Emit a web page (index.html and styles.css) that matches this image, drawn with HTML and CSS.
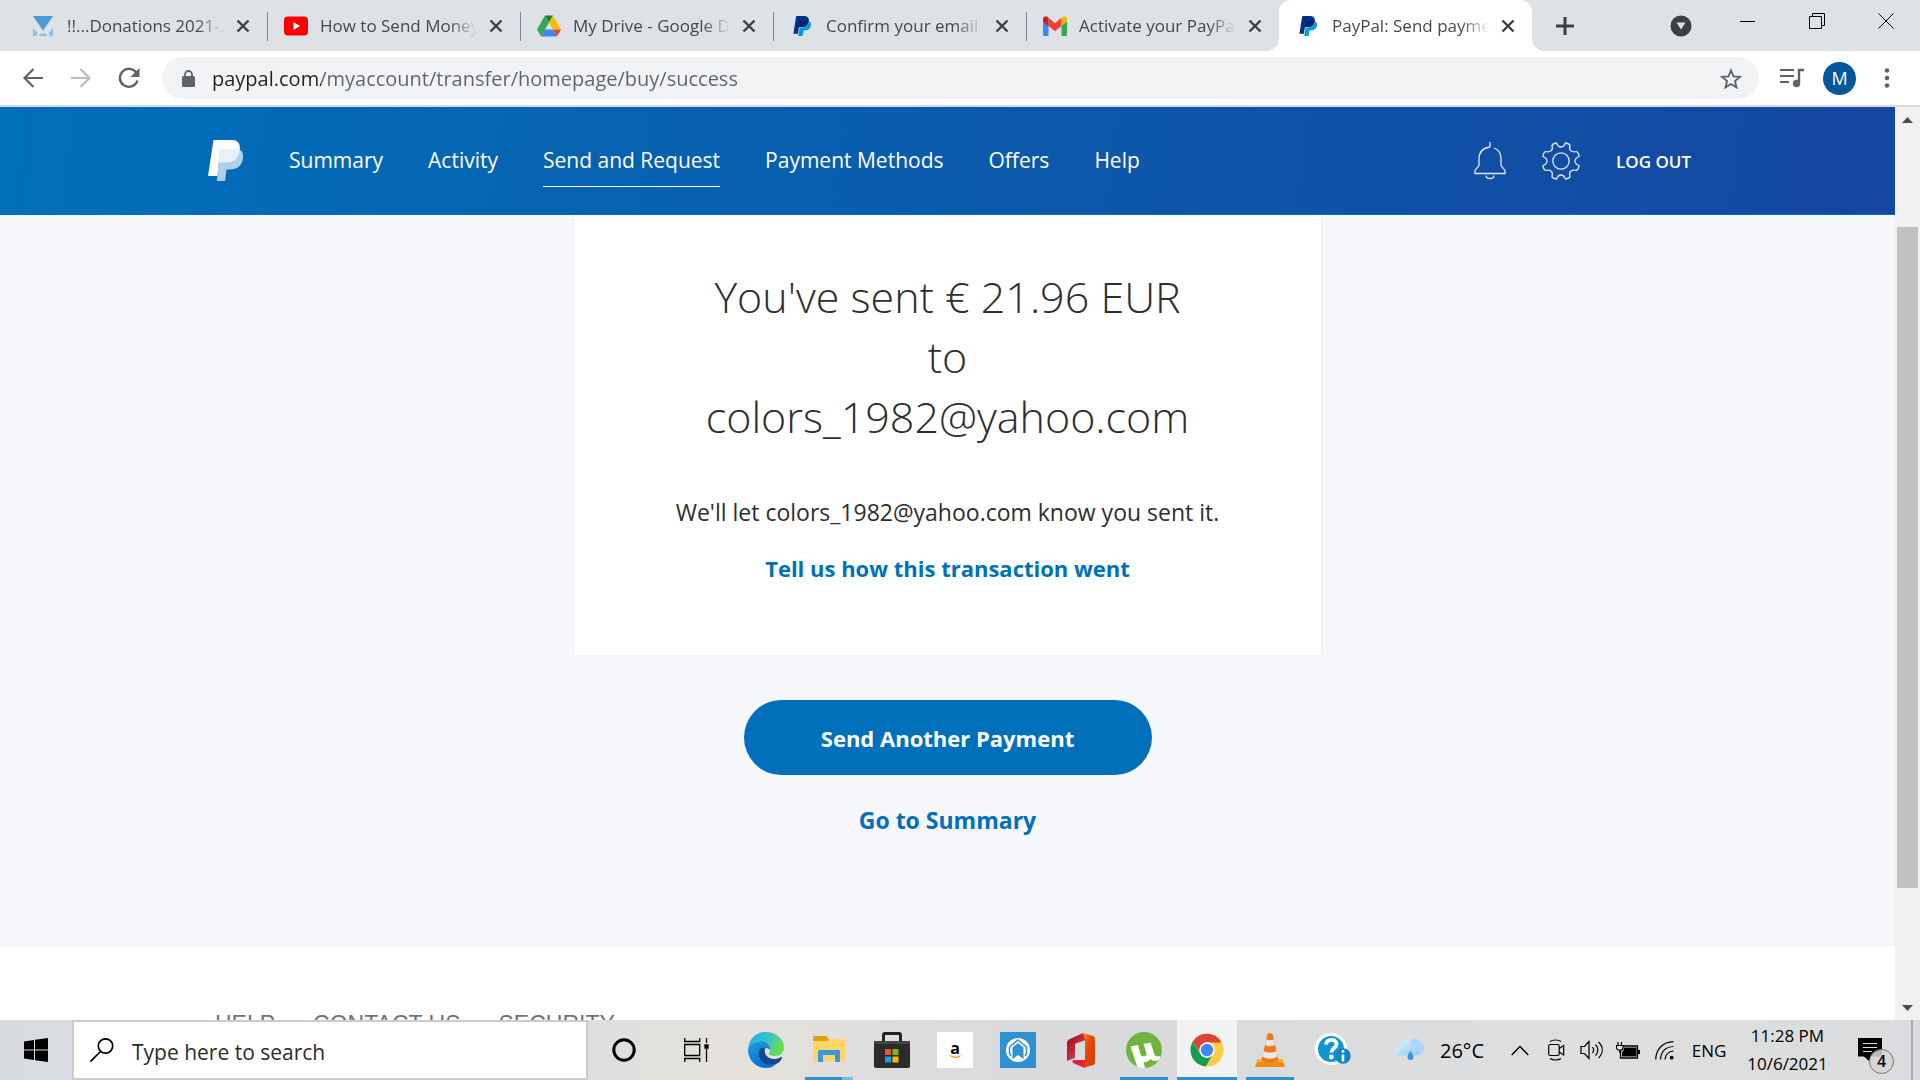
FILE: index.html
```html
<!DOCTYPE html>
<html lang="en">
<head>
<meta charset="utf-8">
<meta name="viewport" content="width=device-width, initial-scale=1">
<title>PayPal: Send payment</title>
<link rel="stylesheet" href="styles.css">
</head>
<body>
<svg class="defs" aria-hidden="true">
  <defs>
    <symbol id="x" viewBox="0 0 14 16"><path d="M1.500 2.500l11 11M12.500 2.500l-11 11" stroke="#3c4043" stroke-width="2.400" fill="none"/></symbol>
    <symbol id="pp" viewBox="0 0 24 24"><path fill="#009cde" d="M21.200 6.900c-.2-.2-.4-.4-.6-.5-.9 5-4.100 7.400-9.200 7.400H9.200l-1.700 9.500c0 .4.200.7.600.7H12c.5 0 .9-.3.900-.8l.8-5.100c.1-.5.500-.8 1-.8h.5c3.800 0 6.700-1.500 7.600-5.900.3-1.900.1-3.400-1.600-4.500z"/><path fill="#003087" d="M7.100 21.300H2.500a.6.600 0 0 1-.7-.7L4.900.9c.1-.5.600-.9 1.100-.9h7.500c2.500 0 4.500.5 5.600 1.800 1 1.200 1.300 2.400 1.100 4.300-1 5.500-4.400 7.200-8.700 7.200H9.300c-.5 0-1 .4-1.100.9z"/><path fill="#012169" d="M9.500 6h9c.9 0 1.300.3 1.600.6-1.200 5.400-4.500 6.700-8.600 6.700H9.300c-.5 0-.9.3-1 .7z"/></symbol>
  </defs>
</svg>

<header class="tabstrip">
  <div class="tabs" role="tablist">
    <div class="tab" role="tab">
      <svg class="fav" viewBox="0 0 18 18"><path fill="#4a9bd4" d="M0 0h18L9 13z"/><path fill="#8cc0e4" d="M0 18v-7l4 4-1 3zM18 18v-7l-4 4 1 3zM6 16h6v2H6z"/></svg>
      <span class="tab-title">!!...Donations 2021-2022</span><button class="tab-x" aria-label="Close tab"><svg><use href="#x"/></svg></button>
    </div>
    <div class="tab" role="tab">
      <svg class="fav wide" viewBox="0 0 24 19"><rect width="24" height="19" rx="4" fill="#f00"/><path fill="#fff" d="M9.500 5.500v8l6.500-4z"/></svg>
      <span class="tab-title">How to Send Money on PayPal</span><button class="tab-x" aria-label="Close tab"><svg><use href="#x"/></svg></button>
    </div>
    <div class="tab" role="tab">
      <svg class="fav wide" viewBox="0 0 24 21"><path fill="#34a853" d="M8 0L0 14l4 7 8-14z"/><path fill="#188038" d="M8 0h8l-4 7z"/><path fill="#fbbc04" d="M16 0l8 14h-8L12 7z"/><path fill="#4285f4" d="M4 21l4-7h8l4 7z"/><path fill="#ea4335" d="M16 14h8l-4 7z"/></svg>
      <span class="tab-title">My Drive - Google Drive</span><button class="tab-x" aria-label="Close tab"><svg><use href="#x"/></svg></button>
    </div>
    <div class="tab" role="tab">
      <svg class="fav"><use href="#pp"/></svg>
      <span class="tab-title">Confirm your email</span><button class="tab-x" aria-label="Close tab"><svg><use href="#x"/></svg></button>
    </div>
    <div class="tab last" role="tab">
      <svg class="fav wide" viewBox="0 0 24 20"><path fill="#4285f4" d="M0 4v14.500c0 .9.700 1.500 1.600 1.500H5.500V9z"/><path fill="#34a853" d="M24 4v14.500c0 .9-.7 1.500-1.600 1.500h-3.900V9z"/><path fill="#ea4335" d="M5.500 1.800L12 7.200l6.500-5.400V10L12 15.300 5.500 10z"/><path fill="#c5221f" d="M0 3.300C0 .6 2.700-.7 4.500.8l1 1V10L0 5.500z"/><path fill="#fbbc04" d="M24 3.300c0-2.700-2.700-4-4.500-2.500l-1 1V10L24 5.500z"/></svg>
      <span class="tab-title">Activate your PayPal account</span><button class="tab-x" aria-label="Close tab"><svg><use href="#x"/></svg></button>
    </div>
    <div class="tab active" role="tab" aria-selected="true">
      <svg class="fav"><use href="#pp"/></svg>
      <span class="tab-title">PayPal: Send payment</span><button class="tab-x" aria-label="Close tab"><svg><use href="#x"/></svg></button>
    </div>
  </div>
  <button class="newtab" aria-label="New tab"><svg width="18" height="18" viewBox="0 0 18 18"><path d="M9 0v18M0 9h18" stroke="#3c4043" stroke-width="3"/></svg></button>
  <div class="window-controls">
    <button class="tabsearch" aria-label="Search tabs"><svg width="22" height="22" viewBox="0 0 22 22"><circle cx="11" cy="11" r="10.500" fill="#3c4043"/><path d="M6.500 7.500h9L11 14.500z" fill="#dee1e6"/></svg></button>
    <button aria-label="Minimize"><svg width="15" height="15" viewBox="0 0 15 15"><path d="M0 7.500h15" stroke="#000"/></svg></button>
    <button aria-label="Restore"><svg width="16" height="16" viewBox="0 0 16 16" fill="none" stroke="#000"><path d="M.5 3.500h12v12H.5zM3.500 3V.5h12v12H13"/></svg></button>
    <button aria-label="Close"><svg width="16" height="16" viewBox="0 0 16 16"><path d="M.5.5l15 15M15.500.5l-15 15" stroke="#000"/></svg></button>
  </div>
</header>

<div class="toolbar">
  <button aria-label="Back"><svg width="20" height="20" viewBox="0 0 20 20" fill="none" stroke="#5f6368" stroke-width="2.200"><path d="M20 10H2M10.500 1L1.500 10l9 9"/></svg></button>
  <button aria-label="Forward"><svg width="20" height="20" viewBox="0 0 20 20" fill="none" stroke="#babcbe" stroke-width="2.200"><path d="M0 10h18M9.500 1l9 9-9 9"/></svg></button>
  <button aria-label="Reload"><svg width="22" height="22" viewBox="0 0 22 22"><path d="M18.500 6A9 9 0 1 0 19.500 13.500" fill="none" stroke="#5f6368" stroke-width="2.400"/><path d="M21.500 1v9h-9z" fill="#5f6368"/></svg></button>
  <div class="omnibox">
    <svg width="13" height="17" viewBox="0 0 13 17"><rect y="6" width="13" height="11" rx="1.500" fill="#5f6368"/><path d="M3 7V4.500a3.500 3.500 0 0 1 7 0V7" fill="none" stroke="#5f6368" stroke-width="1.800"/></svg>
    <input class="url" type="text" aria-label="Address" value="paypal.com/myaccount/transfer/homepage/buy/success">
    <button class="star" aria-label="Bookmark"><svg width="22" height="21" viewBox="0 0 22 21"><path d="M11 2.500l2.500 5.900 6.400.5-4.900 4.200 1.500 6.300L11 16l-5.500 3.400L7 13.100 2.100 8.900l6.400-.5z" fill="none" stroke="#5f6368" stroke-width="1.900"/></svg></button>
  </div>
  <button class="media" aria-label="Media"><svg width="24" height="20" viewBox="0 0 24 20"><path d="M0 2h14M0 8h14M0 14h9" stroke="#5f6368" stroke-width="2.200"/><path d="M19 15V2h5" fill="none" stroke="#5f6368" stroke-width="2.400"/><circle cx="16.500" cy="15.500" r="3.700" fill="#5f6368"/></svg></button>
  <button class="avatar" aria-label="Profile">M</button>
  <button aria-label="Menu"><svg width="6" height="20" viewBox="0 0 6 20" fill="#5f6368"><circle cx="3" cy="2.500" r="2.300"/><circle cx="3" cy="10" r="2.300"/><circle cx="3" cy="17.500" r="2.300"/></svg></button>
</div>

<div class="viewport">
  <div class="page">
    <div class="pp-header">
      <div class="pp-inner">
        <a href="#" class="pp-logo" aria-label="PayPal"><svg width="36" height="42" viewBox="0 0 36 42"><defs><clipPath id="bowl"><path d="M5.500 0H24c6 0 8.500 4 7.800 9.500C31 18 26 22.500 19 22.500H0z"/></clipPath></defs><path fill="#fff" d="M5.500 0H24c6 0 8.500 4 7.800 9.500C31 18 26 22.500 19 22.500h-8L9.500 36H0z"/><path fill="#b0cfe8" d="M14.500 9H30c4 1 5.500 4 5 9-1 8-6 11.500-13 11.500h-3.500L17.300 40c-.1.600-.5 1-1 1H8.800l3-30c.1-1.200 1.200-2 2.700-2z"/><path clip-path="url(#bowl)" fill="#e6f1f8" d="M14.500 9H30c4 1 5.500 4 5 9-1 8-6 11.500-13 11.500h-3.500L17.300 40c-.1.600-.5 1-1 1H8.800l3-30c.1-1.200 1.200-2 2.700-2z"/></svg></a>
        <nav class="pp-nav">
          <a href="#">Summary</a><a href="#">Activity</a><a href="#" class="current">Send and Request</a><a href="#">Payment Methods</a><a href="#">Offers</a><a href="#">Help</a>
        </nav>
        <div class="pp-tools">
          <a href="#" aria-label="Notifications"><svg width="32" height="38" viewBox="0 0 32 38" fill="none" stroke="#dfe8f5" stroke-width="1.300"><path d="M16 0v5M16 5C8.500 6 5 11 5 17v6c0 2-4 4-4 6v2.500h30V29c0-2-4-4-4-6v-6c0-5-2.500-9.500-7-11M12 33.500c0 4 8 4 8 0"/></svg></a>
          <a href="#" aria-label="Settings"><svg width="38" height="38" viewBox="-19 -19 38 38" fill="none" stroke="#dfe8f5" stroke-width="1.300"><circle r="8.200"/><path d="M-4.500-18 Q-8.500-17.500-9-15.500 Q-8-12-9.500-10.500 Q-12-8.500-15.500-9.500 Q-18-8-18-4.500 Q-14-3-14 0 Q-14 3-18 4.500 Q-18 8-15.500 9.500 Q-12 8.500-9.500 10.500 Q-8 12-9 15.500 Q-8.500 17.500-4.500 18 Q-3 14 0 14 Q3 14 4.500 18 Q8.500 17.500 9 15.500 Q8 12 9.500 10.500 Q12 8.500 15.500 9.500 Q18 8 18 4.500 Q14 3 14 0 Q14-3 18-4.500 Q18-8 15.500-9.500 Q12-8.500 9.500-10.500 Q8-12 9-15.500 Q8.500-17.500 4.500-18 Q3-14 0-14 Q-3-14-4.500-18z"/></svg></a>
          <a href="#" class="logout">LOG OUT</a>
        </div>
      </div>
    </div>
    <main>
      <section class="card">
        <h1>You've sent € 21.96 EUR<br>to<br>colors_1982@yahoo.com</h1>
        <p>We'll let colors_1982@yahoo.com know you sent it.</p>
        <a href="#">Tell us how this transaction went</a>
      </section>
      <button class="primary">Send Another Payment</button>
      <a href="#" class="summary-link">Go to Summary</a>
    </main>
    <footer><a href="#">HELP</a><a href="#">CONTACT US</a><a href="#">SECURITY</a></footer>
  </div>
  <div class="scrollbar" aria-hidden="true">
    <svg width="11" height="6" viewBox="0 0 11 6"><path d="M5.500 0L11 6H0z" fill="#505050"/></svg>
    <div class="track"><div class="thumb"></div></div>
    <svg width="11" height="6" viewBox="0 0 11 6"><path d="M5.500 6L11 0H0z" fill="#505050"/></svg>
  </div>
</div>

<div class="taskbar">
  <button class="start" aria-label="Start"><svg width="24" height="24" viewBox="0 0 24 24"><path d="M0 3.500L10 2v9.500H0zM11 1.800L24 0v11.500H11zM0 12.500h10V22L0 20.500zM11 12.500h13V24l-13-1.800z"/></svg></button>
  <label class="search"><svg width="24" height="24" viewBox="0 0 24 24" fill="none" stroke="#000" stroke-width="1.700"><circle cx="15.500" cy="8" r="7.200"/><path d="M10.500 13.500L.5 23.500"/></svg><input type="text" placeholder="Type here to search" aria-label="Type here to search"></label>
  <button class="sys" aria-label="Cortana"><svg width="24" height="24" viewBox="0 0 24 24"><circle cx="12" cy="12" r="10.200" fill="none" stroke="#000" stroke-width="3"/></svg></button>
  <button class="sys" aria-label="Task View"><svg width="25" height="24" viewBox="0 0 25 24" fill="none" stroke="#000" stroke-width="1.300"><path d="M.7 0v3.500h15V0M.7 6.500h15v11H.7zM.7 24v-3.500h15V24M22.500 0v5M22.500 11v13"/><path d="M21 7h3v3h-3z" fill="#000"/></svg></button>
  <div class="apps">
    <button aria-label="Edge"><svg width="36" height="36" viewBox="0 0 36 36"><defs><linearGradient id="e1" x2="1" y2=".4"><stop stop-color="#1fa8e8"/><stop offset=".5" stop-color="#35c1d0"/><stop offset="1" stop-color="#66dd55"/></linearGradient><linearGradient id="e2" y2="1" x2=".5"><stop stop-color="#1b9de2"/><stop offset="1" stop-color="#0b6fd0"/></linearGradient></defs><path fill="url(#e2)" d="M0 18C1 12 7 9 13 9c6 0 10 4 9 9-3-4-9-1-9 5 0 6 7 11 15 9-3 3-6 4-10 4C8 36 0 28 0 18z"/><path fill="#114a8b" d="M12 17c-4 8 3 19 16 15 3-1 5-4 6-6 0-1 0-1-1-1-8 5-18 0-16-8-3-3-4-1-5 0z"/><path fill="url(#e1)" d="M0 17C1 7 8 0 18 0c10 0 18 7 18 15 0 6-4 9-9 9-4 0-7-1-6-3 3-4 0-12-9-12C6 9 2 12 0 17z"/></svg></button>
    <button class="stacked" aria-label="File Explorer"><svg width="32" height="28" viewBox="0 0 32 28"><path fill="#dfa00f" d="M0 1.500C0 .6.600 0 1.500 0h12L16 3v4H0z"/><path fill="#ffd666" d="M0 5h14l2-2h14.500c.9 0 1.500.6 1.500 1.500v19c0 .9-.6 1.500-1.500 1.500h-29C.6 25 0 24.400 0 23.500z"/><path fill="#3a96dd" d="M5 15.500c0-1 .6-1.500 1.500-1.500h19c.9 0 1.500.5 1.500 1.500V26h-5v-7H10v7H5z"/></svg></button>
    <button aria-label="Microsoft Store"><svg width="36" height="36" viewBox="0 0 36 36"><path d="M9.500 10V3c0-1 .5-1.500 1.500-1.500h14c1 0 1.500.5 1.500 1.500v7" fill="none" stroke="#222" stroke-width="3"/><path d="M0 9h36v25c0 1-1 2-2 2H2c-1 0-2-1-2-2z" fill="#2b2b2b"/><path fill="#444" d="M0 9h36v3H0z"/><path fill="#f25022" d="M11 17h6v6h-6z"/><path fill="#7fba00" d="M18.500 17h6v6h-6z"/><path fill="#00a4ef" d="M11 24.500h6v6h-6z"/><path fill="#ffb900" d="M18.500 24.500h6v6h-6z"/></svg></button>
    <button aria-label="Amazon"><span class="amazon"><span>a</span><svg width="11" height="4" viewBox="0 0 11 4"><path d="M.5.500C3 3 8 3 10.500.500" fill="none" stroke="#f90" stroke-width="1.300"/></svg></span></button>
    <button aria-label="Home app"><svg width="36" height="36" viewBox="0 0 36 36"><path fill="#2d92cf" d="M0 0h36v36H0z"/><circle cx="18" cy="18" r="12" fill="#fff"/><path fill="none" stroke="#2d92cf" stroke-width="1.500" d="M11 24l-1.500-2.500V15L18 8l8.500 7v6.500L25 24"/><path fill="#2d92cf" d="M12.500 15.500L18 11l5.500 4.500V27L18 23l-5.500 4z"/></svg></button>
    <button aria-label="Office"><svg width="28" height="35" viewBox="0 0 28 35"><defs><linearGradient id="o1" y2="1"><stop stop-color="#8c0d12"/><stop offset=".5" stop-color="#c9293c"/><stop offset="1" stop-color="#b869c4"/></linearGradient><linearGradient id="o2" y2="1"><stop stop-color="#ff9416"/><stop offset=".4" stop-color="#e34a08"/><stop offset="1" stop-color="#d83b01"/></linearGradient></defs><path fill="url(#o1)" d="M0 10c0-2 1-3 3-4L16 0l3 7-9 3c-1 .4-2 1-2 2v13l-8 3z"/><path fill="#e01f3d" d="M7 27h11v8L6 30c-1-1-1-3 1-3z"/><path fill="url(#o2)" d="M16 0l10 3c1 .3 2 1 2 3v23c0 2-1 3-2 3l-10 3 2-6V6z"/></svg></button>
    <button class="running" aria-label="uTorrent"><svg width="36" height="36" viewBox="0 0 36 36"><defs><clipPath id="disc"><circle cx="18" cy="18" r="18"/></clipPath></defs><circle cx="18" cy="18" r="18" fill="#6fb43f"/><path clip-path="url(#disc)" fill="#fff" d="M4.500 14.500L12 13l2.500 9c1 3.500 6.500 3 6-.5L17.500 12l7-1.500 4 12c.8 2 3.500 2.300 5.500 1.500l1 3c-4 2.500-8.500 2.500-10.500 0-1.500 2.500-4.500 3.500-7 3l1.500 6-7 1z"/></svg></button>
    <button class="focused" aria-label="Chrome"><svg width="34" height="34" viewBox="0 0 34 34"><circle cx="17" cy="17" r="16.500" fill="#ffcd42"/><path fill="#db4437" d="M2.700 8.700a16.500 16.500 0 0 1 28.800.8H17a7.500 7.500 0 0 0-7 10z"/><path fill="#0f9d58" d="M2.700 8.700a16.500 16.500 0 0 0 13 24.700l7.500-12.600a7.500 7.500 0 0 1-13 0z"/><circle cx="17" cy="17" r="7.700" fill="#fff"/><circle cx="17" cy="17" r="6.200" fill="#4285f4"/></svg></button>
    <button class="running" aria-label="VLC"><svg width="30" height="34" viewBox="0 0 30 34"><path fill="#f08a12" d="M3 26h24l3 8H0z"/><path fill="#ffad33" d="M3 26h24l1 3H2z"/><path fill="#ee7a1b" d="M12.500 1c1-1 4-1 5 0l6 26c-1 3-16 3-17 0z"/><path fill="#e8e8e8" d="M11.300 6.500c2 1 5.500 1 7.500 0l1.300 5.500c-3 1.500-7 1.500-10 0zM8.500 18c4 2 9 2 13 0l1.300 5.500c-5 3-10.500 3-15.500 0z"/></svg></button>
    <button aria-label="Help"><svg width="36" height="34" viewBox="0 0 36 34"><circle cx="16" cy="16" r="16" fill="#fff"/><circle cx="16" cy="16" r="13" fill="#0e95d2"/><path d="M11 11.500c1-6 10.500-6 10.500-.5 0 4-5 4-5 8.500" fill="none" stroke="#fff" stroke-width="3.800"/><circle cx="16.300" cy="24" r="2.400" fill="#fff"/><circle cx="28" cy="23" r="7.700" fill="#0e86c4"/><path d="M28 21.500v7M28 17v2.800" stroke="#fff" stroke-width="2.600"/></svg></button>
  </div>
  <div class="tray">
    <button class="weather"><svg width="30" height="24" viewBox="0 0 30 24"><defs><linearGradient id="w" x2="1" y2="1"><stop stop-color="#e2f4fe"/><stop offset="1" stop-color="#8fc8f2"/></linearGradient></defs><path fill="#a9d8f8" d="M14 5c2-7 11-5 11 0 6 1 6 11-1 12h-8z"/><path fill="url(#w)" d="M5 17.500C-1.500 17.500-1 9 4.500 9 5 1 16-1 18.500 7c5-1 6 3 5.500 6-1 4-3 4.500-5 4.500z"/><path fill="#3f8fe0" d="M15.500 13c4 5 4 8.500 0 9-4-.5-4-4 0-9z"/></svg><span>26°C</span></button>
    <button class="cell" aria-label="Show hidden icons"><svg width="18" height="11" viewBox="0 0 18 11"><path d="M.7 10L9 1.500l8.300 8.500" fill="none" stroke="#000" stroke-width="1.400"/></svg></button>
    <button class="cell" aria-label="Meet Now"><svg width="17" height="22" viewBox="0 0 17 22" fill="none" stroke="#000" stroke-width="1.200"><rect x=".7" y="5.500" width="10.500" height="11" rx="1.500"/><path d="M11.200 9.500l4.500-3v9.500l-4.500-3M2 2.500c3-2 8-2 11 0M2 19.500c3 2 8 2 11 0"/></svg></button>
    <button class="cell" aria-label="Volume"><svg width="24" height="20" viewBox="0 0 24 20" fill="none" stroke="#000" stroke-width="1.200"><path d="M1 6.500h3.500L9 1.500v17l-4.500-5H1zM12.500 7c1.500 2 1.500 4 0 6M15.500 4.500c3 3.500 3 7.500 0 11M18.500 2c5 5 5 11 0 16"/></svg></button>
    <button class="cell" aria-label="Battery"><svg width="24" height="17" viewBox="0 0 24 17"><path d="M4.500 8v8h17V4H7" fill="none" stroke="#000" stroke-width="1.300"/><path d="M8 5.500h12.500v9H6V10c1.500-1 2-2 2-4.500zM22 8h2v4h-2z"/><path d="M2 0v3.500M5.500 0v3.500M.5 3.500h6.500V6c0 3-6.500 3-6.500 0zM3.800 8v3" fill="none" stroke="#000" stroke-width="1.200"/></svg></button>
    <button class="cell" aria-label="Wi-Fi"><svg width="19" height="19" viewBox="0 0 19 19" fill="none" stroke="#000" stroke-width="1.200"><path d="M.7 18.500C1 8 8 1 18.500.7M5.500 18.500C6 10.500 10.500 6 18.500 5.500M10 18.500c.5-5 3.500-8 8.500-8.500"/><circle cx="16.700" cy="16.700" r="1.300" fill="#000"/></svg></button>
    <button class="lang">ENG</button>
    <button class="clock"><time>11:28 PM</time><time>10/6/2021</time></button>
    <button class="action" aria-label="Notifications"><svg width="24" height="24" viewBox="0 0 24 24"><path d="M0 0h24v18.500H12V24l-6-5.500H0z"/><path d="M5 5.500h14M5 9.500h14M5 13.500h9" stroke="#ddd" stroke-width="1.200"/></svg><span class="badge">4</span></button>
    <span class="desk"></span>
  </div>
</div>
</body>
</html>
```
FILE: styles.css
```css
* { box-sizing: border-box; }
body {
  margin: 0;
  height: 100vh;
  display: flex;
  flex-direction: column;
  overflow: hidden;
  font-family: "Open Sans", "Noto Sans", sans-serif;
  background: #fff;
}
.defs { position: absolute; width: 0; height: 0; }
button {
  border: 0;
  padding: 0;
  background: none;
  font: inherit;
  color: inherit;
  display: flex;
  align-items: center;
  justify-content: center;
  flex: none;
}
a { text-decoration: none; color: inherit; }
svg { display: block; flex: none; }

/* Tab strip */
.tabstrip { flex: none; height: 51px; display: flex; background: #dee1e6; padding-left: 14px; }
.tabs { display: flex; min-width: 0; }
.tab {
  position: relative;
  width: 253px;
  min-width: 0;
  display: flex;
  align-items: center;
  padding: 0 17px;
  color: #45494d;
  font-size: 17px;
}
.tab::after { content: ""; position: absolute; right: -1px; top: 12px; width: 1px; height: 29px; background: #80868b; }
.tab.last::after, .tab.active::after { display: none; }
.tab.active { background: #fff; border-radius: 12px 12px 0 0; }
.tab.active::before {
  content: "";
  position: absolute;
  left: -12px;
  right: -12px;
  bottom: 0;
  height: 12px;
  background:
    radial-gradient(circle at 0 0, transparent 12px, #fff 12px) left / 12px 12px no-repeat,
    radial-gradient(circle at 100% 0, transparent 12px, #fff 12px) right / 12px 12px no-repeat;
}
.fav { width: 24px; height: 22px; padding: 0 2px; margin-right: 12px; }
.fav.wide { padding: 0; }
.tab-title {
  flex: 1;
  overflow: hidden;
  white-space: nowrap;
  line-height: 24px;
  -webkit-mask-image: linear-gradient(90deg, #000 calc(100% - 28px), transparent);
  mask-image: linear-gradient(90deg, #000 calc(100% - 28px), transparent);
}
.tab-x { width: 14px; height: 16px; margin-left: 12px; }
.tab-x svg { width: 14px; height: 16px; }
.newtab { width: 66px; }
.window-controls { margin-left: auto; display: flex; height: 42px; }
.window-controls button { width: 69px; }
.window-controls .tabsearch { height: 51px; width: 64px; }

/* Toolbar */
.toolbar {
  flex: none;
  height: 56px;
  display: flex;
  align-items: center;
  padding: 0 9px;
  border-bottom: 2px solid #dadada;
}
.toolbar > button { width: 48px; height: 48px; }
.omnibox {
  flex: 1;
  height: 42px;
  margin: 0 9px;
  padding: 0 17px 0 20px;
  border-radius: 21px;
  background: #f1f3f4;
  display: flex;
  align-items: center;
  gap: 17px;
}
.url {
  flex: 1;
  min-width: 0;
  border: 0;
  padding: 2px 0 0;
  font: 20px/30px "Open Sans", sans-serif;
  color: #5f6368;
  background: linear-gradient(90deg, #202124 109px, #5f6368 109px);
  -webkit-background-clip: text;
  background-clip: text;
  -webkit-text-fill-color: transparent;
}
.toolbar > .avatar { width: 33px; height: 33px; margin: 0 7px; border-radius: 50%; background: #01579b; color: #fff; font-size: 18px; }

/* Page area */
.viewport { flex: 1; min-height: 0; display: flex; overflow: hidden; }
.page { flex: 1; min-width: 0; overflow: hidden; }
.pp-header {
  height: 108px;
  padding: 0 204px 0 208px;
  background: linear-gradient(97deg, #0070ba, #1546a0);
  border-bottom: 1px solid #0070ba;
  color: #fff;
  font-weight: 500;
}
.pp-inner { height: 100%; max-width: 1484px; margin: 0 auto; display: flex; align-items: center; }
.pp-nav { display: flex; gap: 45px; margin-left: 45px; font-size: 21px; line-height: 28px; }
.pp-nav a { padding: 12px 0; border-bottom: 1px solid transparent; }
.pp-nav .current { border-color: #fff; }
.pp-tools { margin-left: auto; display: flex; align-items: center; gap: 36px; }
.logout { padding-top: 2px; font-size: 17px; line-height: 24px; font-weight: 600; }
main {
  display: flex;
  flex-direction: column;
  align-items: center;
  padding-bottom: 112px;
  background: #f5f7fb;
  color: #2c2e2f;
}
.card {
  width: 100%;
  max-width: 749px;
  padding: 52px 24px 72px;
  border: 1px solid #eff0f2;
  border-top: 0;
  background: #fff;
  text-align: center;
  font-size: 22px;
  line-height: 30px;
}
h1 { margin: 0 0 50px; font-size: 43px; line-height: 60px; font-weight: 300; }
.card p { margin: 0 0 26px; font-size: 23px; }
.card a, .summary-link { color: #0070ba; font-weight: 700; }
.primary {
  width: 408px;
  height: 75px;
  margin: 44px 0 30px;
  border-radius: 38px;
  background: #0070ba;
  color: #fff;
  font-size: 22px;
  font-weight: 700;
}
.summary-link { font-size: 23px; line-height: 30px; }
footer {
  display: flex;
  gap: 38px;
  padding: 62px 215px;
  font: 23px/30px "Liberation Sans", Arial, sans-serif;
  color: #6c7378;
}
.scrollbar {
  flex: none;
  width: 25px;
  background: #f1f1f1;
  display: flex;
  flex-direction: column;
  align-items: center;
  padding: 10px 0 9px;
}
.track { flex: 1; width: 21px; padding: 104px 0 117px; display: flex; }
.thumb { flex: 1; background: #c1c1c1; }

/* Taskbar */
.taskbar {
  flex: none;
  height: 60px;
  display: flex;
  background: linear-gradient(90deg, #d8dbe0, #dcddde 28%, #e5e2dd 38%, #dcdcdc 48%, #d8dadc 56%, #dcddde 75%, #dedfdd 88%, #d9dbde);
  color: #000;
}
.start { width: 72px; }
.search {
  flex: 0 1 516px;
  display: flex;
  align-items: center;
  gap: 18px;
  padding: 0 16px;
  border: 2px solid #ccc;
  background: #fff;
}
.search input { flex: 1; min-width: 0; border: 0; padding: 4px 0 0; font: 21px/28px "Open Sans", sans-serif; }
.search input::placeholder { color: #2b2b2b; opacity: 1; }
.sys { width: 72px; }
.apps { display: flex; gap: 3px; margin-left: 4px; }
.apps button { position: relative; width: 60px; }
.apps .running::after, .apps .focused::after, .apps .stacked::after {
  content: "";
  position: absolute;
  left: 6px;
  right: 6px;
  bottom: 0;
  height: 3px;
  background: #2b93d1;
}
.apps .focused { background: #f2f2f2; }
.apps .focused::after { left: 0; right: 0; }
.apps .stacked::after { background: linear-gradient(90deg, #2b93d1 37px, #7fbbe0 37px); }
.amazon {
  width: 36px;
  height: 36px;
  background: #fff;
  display: flex;
  flex-direction: column;
  align-items: center;
  justify-content: center;
  font-size: 16px;
  font-weight: 700;
  line-height: 14px;
}
.tray { margin-left: auto; display: flex; }
.weather { gap: 15px; padding-right: 18px; font-size: 20px; }
.cell { width: 36px; }
.lang { width: 54px; font-size: 17px; }
.clock { width: 103px; flex-direction: column; font-size: 17px; line-height: 28px; }
.action { position: relative; width: 72px; padding-right: 10px; }
.badge {
  position: absolute;
  left: 30px;
  top: 29px;
  width: 25px;
  height: 25px;
  border: 1px solid #777;
  border-radius: 50%;
  background: #d5d5d5dd;
  font-size: 16px;
  font-weight: 600;
  line-height: 23px;
}
.desk { width: 9px; border-left: 2px solid #aaa; }
```
